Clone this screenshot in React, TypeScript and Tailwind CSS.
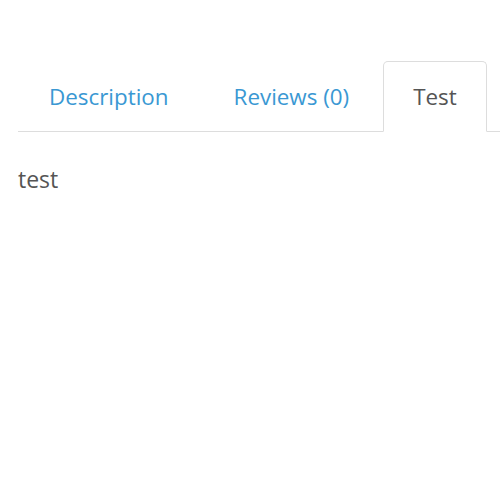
const tabs = ["Description", "Reviews (0)", "Test"];

export default function App() {
  const active = "Test";

  return (
    <div className="h-[500px] w-[500px] overflow-hidden bg-white font-['Open_Sans',sans-serif]">
      <div className="pl-[18px] pt-[61px]">
        <ul className="flex border-b border-[#dddddd]">
          {tabs.map((tab) => (
            <li key={tab} className="-mb-px mr-[3px]">
              <span
                className={`block rounded-t-[5px] border py-[20px] text-[22.4px] leading-[29px] ${
                  tab === active
                    ? "border-[#dddddd] border-b-white bg-white px-[29px] text-[#555555]"
                    : "border-transparent px-[30px] text-[#3a98d3]"
                }`}
              >
                {tab}
              </span>
            </li>
          ))}
        </ul>
        <p className="mt-[33px] text-[23px] leading-[28px] text-[#555555]">test</p>
      </div>
    </div>
  );
}
